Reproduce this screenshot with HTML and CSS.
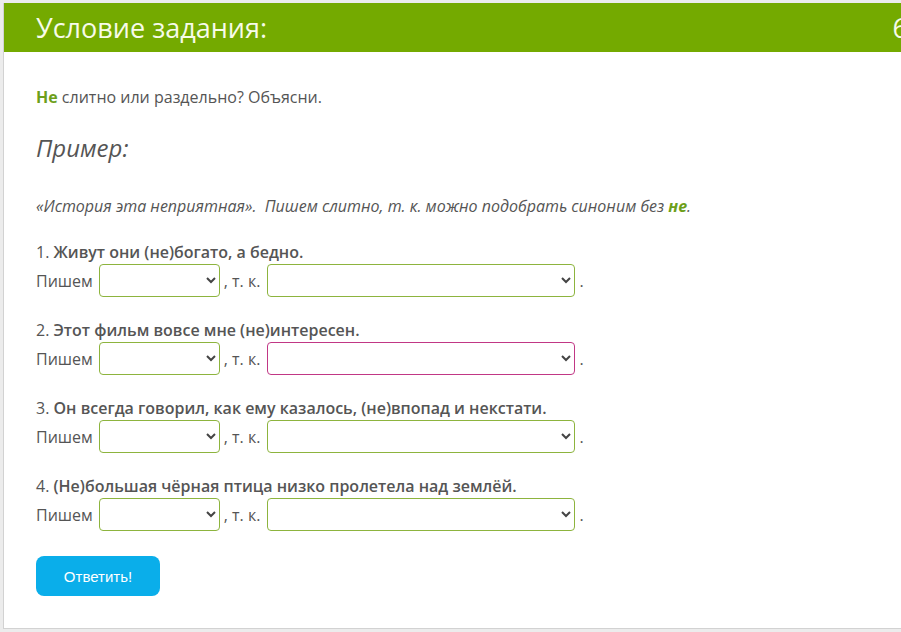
FILE: index.html
```html
<!DOCTYPE html>
<html lang="ru">
<head>
    <meta charset="UTF-8">
    <title>Условие задания</title>
    <link rel="stylesheet" href="styles.css">
</head>
<body>

    <!-- Task card -->
    <div class="task-card">
        <div class="task-header">
            <h1>Условие задания:</h1>
            <span class="task-points">6</span>
        </div>

        <div class="task-body">
            <p class="task-text"><b class="accent">Не</b> слитно или раздельно? Объясни.</p>

            <h2 class="example-title">Пример:</h2>
            <p class="example-text">«История эта неприятная».&nbsp; Пишем слитно, т. к. можно подобрать синоним без <b class="accent">не</b>.</p>

            <div class="question">
                <p class="question-title">1. <span>Живут они (не)богато, а бедно.</span></p>
                <div class="answer-row">
                    Пишем
                    <select class="pick pick-short"><option></option><option>слитно</option><option>раздельно</option></select>
                    , т. к.
                    <select class="pick pick-long"><option></option></select>
                    .
                </div>
            </div>

            <div class="question">
                <p class="question-title">2. <span>Этот фильм вовсе мне (не)интересен.</span></p>
                <div class="answer-row">
                    Пишем
                    <select class="pick pick-short"><option></option><option>слитно</option><option>раздельно</option></select>
                    , т. к.
                    <select class="pick pick-long pick-active"><option></option></select>
                    .
                </div>
            </div>

            <div class="question">
                <p class="question-title">3. <span>Он всегда говорил, как ему казалось, (не)впопад и некстати.</span></p>
                <div class="answer-row">
                    Пишем
                    <select class="pick pick-short"><option></option><option>слитно</option><option>раздельно</option></select>
                    , т. к.
                    <select class="pick pick-long"><option></option></select>
                    .
                </div>
            </div>

            <div class="question">
                <p class="question-title">4. <span>(Не)большая чёрная птица низко пролетела над землёй.</span></p>
                <div class="answer-row">
                    Пишем
                    <select class="pick pick-short"><option></option><option>слитно</option><option>раздельно</option></select>
                    , т. к.
                    <select class="pick pick-long"><option></option></select>
                    .
                </div>
            </div>

            <button class="submit-btn">Ответить!</button>
        </div>
    </div>

</body>
</html>
```

FILE: styles.css
```css
body {
    margin: 0;
    background-color: #ececec;
    font-family: "Open Sans", "Noto Sans", sans-serif;
    color: #555;
    overflow: hidden;
}

/* Card */
.task-card {
    margin: 3px 0 0 3px;
    width: 910px;
    background-color: #fff;
    border-left: 1px solid #d2d2d2;
    border-bottom: 1px solid #d2d2d2;
}

.task-header {
    display: flex;
    align-items: center;
    justify-content: space-between;
    height: 49px;
    padding: 0 0 0 32px;
    background-color: #74aa00;
    color: #f7fbe9;
}

.task-header h1 {
    margin: 0;
    font-size: 27px;
    font-weight: 400;
}

.task-points {
    font-size: 27px;
    margin-right: 6px;
}

/* Body */
.task-body {
    padding: 34px 32px 32px;
    font-size: 16px;
}

.accent {
    color: #6d9f1a;
    font-weight: 700;
}

.task-text {
    margin: 0;
    line-height: 22px;
}

.example-title {
    margin: 24px 0 0;
    font-size: 24px;
    font-style: italic;
    font-weight: 400;
    line-height: 32px;
}

.example-text {
    margin: 31px 0 0;
    font-size: 16px;
    font-style: italic;
    line-height: 22px;
}

/* Questions */
.question {
    margin-top: 24px;
}

.question + .question {
    margin-top: 22px;
}

.question-title {
    margin: 0;
    line-height: 22px;
}

.question-title span {
    font-weight: 600;
}

.answer-row {
    display: flex;
    align-items: center;
    gap: 4px;
    margin-top: 1px;
    line-height: 22px;
}

.pick {
    height: 33px;
    border: 1px solid #8db43e;
    border-radius: 4px;
    background-color: #fff;
    font-family: inherit;
    font-size: 14px;
    color: #444;
    padding: 0 6px;
}

.pick-short {
    width: 121px;
    margin-left: 2px;
}

.pick-long {
    width: 308px;
    margin-left: 3px;
}

.pick-active {
    border-color: #c13785;
}

/* Submit */
.submit-btn {
    margin-top: 25px;
    width: 124px;
    height: 40px;
    border: none;
    border-radius: 8px;
    background-color: #0aaeea;
    color: #fff;
    font-family: "Liberation Sans", sans-serif;
    font-size: 15px;
    cursor: pointer;
}
```
